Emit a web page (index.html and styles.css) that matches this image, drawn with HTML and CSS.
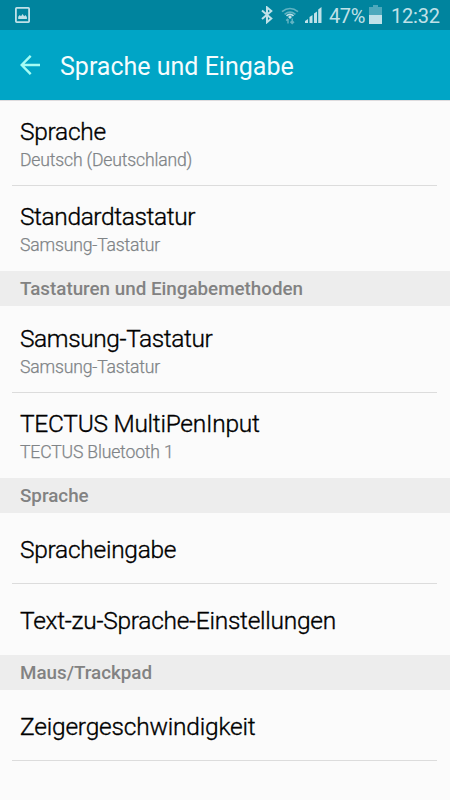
FILE: index.html
```html
<!DOCTYPE html>
<html lang="de">
<head>
<meta charset="utf-8">
<title>Sprache und Eingabe</title>
<link rel="stylesheet" href="styles.css">
</head>
<body>
<div class="status">
  <svg class="shot" width="15" height="16" viewBox="0 0 15 16"><rect x=".9" y=".9" width="13.2" height="14.2" rx=".8" fill="none" stroke="currentColor" stroke-width="1.8"/><path d="M3.2 12V9.8L4.8 8l1.2 1.3L7.6 7l1.6 2.2L10.4 8l1.5 2V12z" fill="currentColor"/></svg>
  <svg class="bt" width="12" height="18" viewBox="0 0 12 18"><path d="M1 4.5l9.3 8L6 16.2V1.4L10.3 5 1 13" fill="none" stroke="currentColor" stroke-width="2"/></svg>
  <svg class="wifi" width="18" height="18" viewBox="0 0 18 18" fill="none" stroke="currentColor"><path d="M1 4.6Q9-1.6 17 4.6M3.6 7.4Q9 3 14.4 7.4" stroke-width="1.7" opacity=".5"/><path d="M5.5 8.8Q9 5.8 12.5 8.8" stroke-width="1.7"/><path d="M9 8.2l2 1.8-2 2-2-2z" fill="currentColor" stroke="none"/><path d="M7 16.5V12M5.2 13.6L7 11.8M11.2 11.5v5M9.4 14.6l1.8 1.8 1.8-1.8" stroke-width="1.5" opacity=".5"/></svg>
  <svg class="signal" width="17" height="16" viewBox="0 0 17 16" fill="currentColor"><path d="M0 16v-2l3-2v4zM4.5 16v-6l3-2v8zM9 16V6.5l3-2V16zM13.2 16V2.5L16.5 0v16z"/></svg>
  <span class="percent">47%</span>
  <svg class="battery" width="13" height="19" viewBox="0 0 13 19" fill="currentColor"><path d="M0 2h4V0h5v2h4v8H0z" opacity=".4"/><path d="M0 10h13v9H0z"/></svg>
  <span class="clock">12:32</span>
</div>
<header class="bar">
  <svg width="20" height="20" viewBox="0 0 20 20" fill="none" stroke="currentColor" stroke-width="2.4"><path d="M20 10H1.7M10.7.8L1.7 10l9 9.2"/></svg>
  <h1>Sprache und Eingabe</h1>
</header>
<main>
  <div class="row line"><div class="name">Sprache</div><div class="sub">Deutsch (Deutschland)</div></div>
  <div class="row"><div class="name tight">Standardtastatur</div><div class="sub">Samsung-Tastatur</div></div>
  <h2>Tastaturen und Eingabemethoden</h2>
  <div class="row line tall"><div class="name tight">Samsung-Tastatur</div><div class="sub">Samsung-Tastatur</div></div>
  <div class="row"><div class="name">TECTUS MultiPenInput</div><div class="sub">TECTUS Bluetooth 1</div></div>
  <h2>Sprache</h2>
  <div class="row line single"><div class="name">Spracheingabe</div></div>
  <div class="row single"><div class="name">Text-zu-Sprache-Einstellungen</div></div>
  <h2>Maus/Trackpad</h2>
  <div class="row line single"><div class="name wide">Zeigergeschwindigkeit</div></div>
</main>
</body>
</html>
```
FILE: styles.css
```css
* { box-sizing: border-box; }
body { margin: 0; width: 450px; height: 800px; overflow: hidden; background: #fbfbfb; color: #000; font-family: Roboto, "Liberation Sans", sans-serif; }
.status { height: 30px; background: #00849e; color: #c0e1e8; display: flex; align-items: flex-start; padding-left: 15px; white-space: nowrap; }
.status svg { flex: none; }
.shot { margin-top: 7px; }
.bt { margin: 6px 0 0 231px; }
.wifi { margin: 7px 0 0 8px; }
.signal { margin: 7px 0 0 6px; }
.percent { margin-left: 7px; width: 38px; font-size: 20px; line-height: 32px; letter-spacing: -.4px; }
.battery { margin: 5px 0 0 2px; }
.clock { margin-left: 9px; font-size: 20px; line-height: 32px; letter-spacing: -.2px; }
.bar { height: 70px; background: #00a5c6; color: #a5fcf4; display: flex; align-items: center; padding: 0 20px; gap: 20px; }
.bar h1 { margin: 3px 0 0; font-size: 25px; font-weight: 400; line-height: 30px; color: #f5fcfd; }
main { border-top: 1px solid #dedcde; }
.row { height: 85px; margin: 0 13px 0 12px; padding: 16px 8px 0; white-space: nowrap; }
.line { border-bottom: 1px solid #dcdcdc; }
.tall { height: 87px; padding-top: 18px; }
.name { font-size: 24.5px; font-weight: 300; line-height: 30px; letter-spacing: -.27px; -webkit-text-stroke: .35px #000; }
.tight { letter-spacing: -.4px; }
.wide { letter-spacing: -.2px; }
.sub { font-size: 17.6px; font-weight: 300; line-height: 27px; letter-spacing: -.17px; color: #808487; -webkit-text-stroke: .25px #808487; }
.single { height: 71px; padding-top: 22px; }
h2 { margin: 0; height: 35px; padding-left: 20px; background: #ededed; color: #828282; font-size: 18.8px; line-height: 36px; font-weight: 500; }
```
